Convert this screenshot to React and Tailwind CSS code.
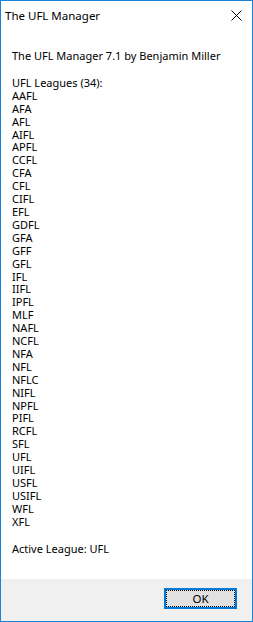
const leagues = ["AAFL","AFA","AFL","AIFL","APFL","CCFL","CFA","CFL","CIFL","EFL","GDFL","GFA","GFF","GFL","IFL","IIFL","IPFL","MLF","NAFL","NCFL","NFA","NFL","NFLC","NIFL","NPFL","PIFL","RCFL","SFL","UFL","UIFL","USFL","USIFL","WFL","XFL"];

export default function App() {
  return (
    <div className="w-[253px] h-[622px] border border-[#1883d7] bg-white flex flex-col text-black text-[11px] [font-family:'Noto_Sans',sans-serif]">
      <div className="h-[29px] flex items-center justify-between pl-[4px] pr-[9px]">
        <span className="text-[11.5px] leading-[13px]">The UFL Manager</span>
        <svg width="11" height="11" viewBox="0 0 11 11" className="mr-[1px]">
          <path d="M0.5 0.5 L10.5 10.5 M10.5 0.5 L0.5 10.5" stroke="#000" strokeWidth="1" />
        </svg>
      </div>
      <div className="flex-1 pl-[11px] pt-[20px] leading-[12.9px]">
        <div>The UFL Manager 7.1 by Benjamin Miller</div>
        <div className="h-[14px]" />
        <div>UFL Leagues (34):</div>
        {leagues.map((l) => (
          <div key={l}>{l}</div>
        ))}
        <div className="h-[14px]" />
        <div>Active League: UFL</div>
      </div>
      <div className="h-[42px] bg-[#f0f0f0] flex items-start justify-end pr-[15px] pt-[9px]">
        <button className="w-[73px] h-[21px] border-2 border-[#0078d7] bg-[#e1e1e1] p-0 flex">
          <span className="flex-1 border border-dotted border-black flex items-center justify-center leading-none text-[11.5px]">OK</span>
        </button>
      </div>
    </div>
  );
}
